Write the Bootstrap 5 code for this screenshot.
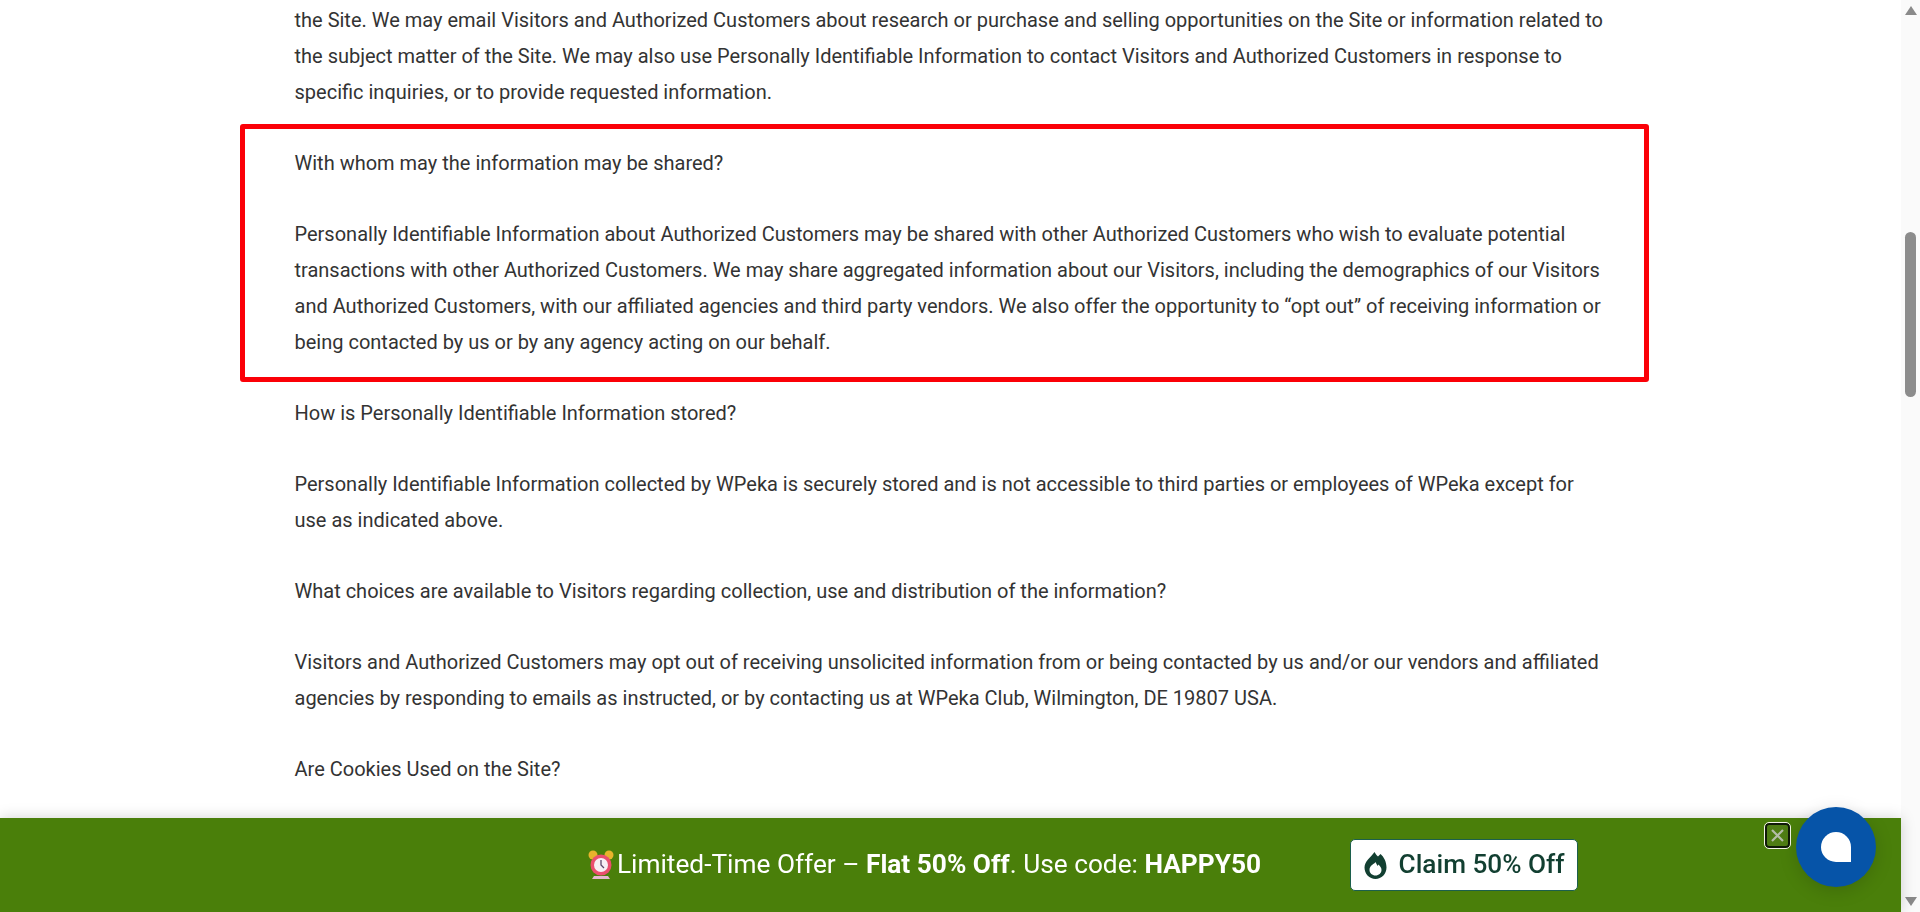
<!DOCTYPE html>
<html lang="en"><head><meta charset="utf-8"><title>Privacy Policy</title>
<link href="https://cdn.jsdelivr.net/npm/bootstrap@5.3.0/dist/css/bootstrap.min.css" rel="stylesheet">
<style>
html,body{height:100%;overflow:hidden;background:#fff}
body{font-family:Roboto,"Liberation Sans",sans-serif;color:#333}
.page-shell{height:912px}
.page-main{flex:1 1 auto;min-width:0;padding:2px 0 0 240px}
.legal-copy{width:1409px}
.legal-copy p{font-size:20px;line-height:36px;margin:0 0 35px;padding:0 40px 0 54.500px;color:#333}
.legal-mark{border:5px solid #fb0007;border-radius:3px;padding:16px 0 0;margin:-21px 0 13px}
.legal-mark p{padding-left:49.500px!important;padding-right:35px!important}
.legal-mark p:last-child{margin-bottom:17px}
.fake-scroll{width:19px;background:#fafafa;flex:none;padding:6px 4px}
.fake-arrow{width:0;height:0;margin:0 auto;border-left:6px solid transparent;border-right:6px solid transparent}
.fake-up{border-bottom:9px solid #8a8a8a}
.fake-down{border-top:9px solid #8a8a8a}
.fake-thumb{height:165px;background:#8c8c8c;border-radius:6px;margin:217px 0 auto}
.promo-bar{right:19px;height:94px;background:#4a7f0a;box-shadow:0 0 14px rgba(0,0,0,.18);color:#fff;font-size:26.250px;padding-left:265px}
.promo-text{gap:3px}
.promo-btn{width:228px;height:52px;margin-left:89px;background:#fff;color:#123f31;font-size:26.200px;font-weight:500;border:1px solid #1c5f4c;border-radius:5px;padding:0;gap:12px}
.promo-close{position:absolute;left:1765px;top:5px;width:25px;height:25px;padding:0;background:#4f7d14;border:2px solid #101a08;outline:1px solid #f5f5e8;border-radius:4px}
.chat-orb{position:absolute;left:1796px;top:-11px;width:80px;height:80px;background:#0654a8;border-radius:50%;box-shadow:0 4px 18px rgba(0,0,0,.15)}
.chat-drop{width:30px;height:30px;background:#fff;border-radius:50% 50% 0 50%}
</style></head><body>
<div class="page-shell d-flex">
<main class="page-main">
<div class="legal-copy">
<p>the Site. We may email Visitors and Authorized Customers about research or purchase and selling opportunities on the Site or information related to the subject matter of the Site. We may also use Personally Identifiable Information to contact Visitors and Authorized Customers in response to specific inquiries, or to provide requested information.</p>
<div class="legal-mark">
<p>With whom may the information may be shared?</p>
<p>Personally Identifiable Information about Authorized Customers may be shared with other Authorized Customers who wish to evaluate potential transactions with other Authorized Customers. We may share aggregated information about our Visitors, including the demographics of our Visitors and Authorized Customers, with our affiliated agencies and third party vendors. We also offer the opportunity to “opt out” of receiving information or being contacted by us or by any agency acting on our behalf.</p>
</div>
<p>How is Personally Identifiable Information stored?</p>
<p>Personally Identifiable Information collected by WPeka is securely stored and is not accessible to third parties or employees of WPeka except for use as indicated above.</p>
<p>What choices are available to Visitors regarding collection, use and distribution of the information?</p>
<p>Visitors and Authorized Customers may opt out of receiving unsolicited information from or being contacted by us and/or our vendors and affiliated agencies by responding to emails as instructed, or by contacting us at WPeka Club, Wilmington, DE 19807 USA.</p>
<p>Are Cookies Used on the Site?</p>
</div>
</main>
<div class="fake-scroll d-flex flex-column" aria-hidden="true">
<div class="fake-arrow fake-up"></div>
<div class="fake-thumb"></div>
<div class="fake-arrow fake-down"></div>
</div>
</div>
<div class="promo-bar position-fixed bottom-0 start-0 d-flex align-items-center justify-content-center">
<div class="promo-text d-flex align-items-center">
<svg width="26" height="30" viewBox="0 0 26 30"><circle cx="5" cy="5" r="4.500" fill="#e8b32c"/><circle cx="21" cy="5" r="4.500" fill="#e8b32c"/><path d="M6 26h14l2 3H4z" fill="#e5b8d0"/><circle cx="13" cy="15" r="10.500" fill="#ea4f6e"/><circle cx="13" cy="15" r="7" fill="#f7f0f4"/><path d="M13 10v5l3 3" stroke="#5b4a6b" stroke-width="1.300" fill="none"/></svg>
<span>Limited-Time Offer – <strong>Flat 50% Off</strong>. Use code: <strong>HAPPY50</strong></span>
</div>
<button type="button" class="promo-btn btn d-flex align-items-center justify-content-center">
<svg width="23" height="27" viewBox="0 0 22 27"><path fill="#123f31" fill-rule="evenodd" d="M10 0c1 2 2 3 3.500 4.500L16 2c3.500 3 6 8 6 13.500C22 22 17 27 11 27S0 22 0 15.500C0 9 6 6 10 0zm1 10c-1 2-6 3-6 8 0 3 2.700 5.500 6 5.500s6-2.500 6-5.500c0-2.500-1.500-4-3-5.500l-1 1.500C12.500 13 11.500 11 11 10z"/></svg>
<span>Claim 50% Off</span>
</button>
<button type="button" class="promo-close d-flex align-items-center justify-content-center" aria-label="Close"><svg width="15" height="15" viewBox="0 0 15 15"><path d="M2 2l11 11M13 2L2 13" stroke="#b4bca8" stroke-width="2.200"/></svg></button>
<div class="chat-orb d-flex align-items-center justify-content-center"><div class="chat-drop"></div></div>
</div>
</body></html>
